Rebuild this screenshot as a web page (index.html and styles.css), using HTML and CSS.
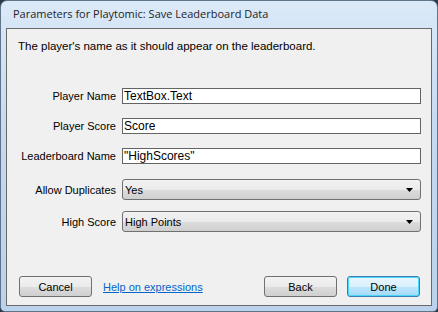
FILE: index.html
```html
<html>
  <head>
    <meta name="viewport" content="width=device-width,initial-scale=1">
    <title>Parameters for Playtomic: Save Leaderboard Data</title>
    <link rel="stylesheet" href="styles.css">
  </head>
  <body>
    <div class="window">
      <div class="titlebar">Parameters for Playtomic: Save Leaderboard Data</div>
      <div class="client">
        <p class="description">The player's name as it should appear on the leaderboard.</p>

        <div class="fields">
          <label class="field-label">Player Name</label>
          <div class="textbox">TextBox.Text</div>

          <label class="field-label">Player Score</label>
          <div class="textbox">Score</div>

          <label class="field-label">Leaderboard Name</label>
          <div class="textbox">"HighScores"</div>
        </div>

        <div class="fields combos">
          <label class="field-label">Allow Duplicates</label>
          <div class="combo">
            <span>Yes</span>
            <svg class="arrow" width="7" height="4" viewBox="0 0 7 4"><path d="M0 0h7L3.5 4z" fill="#000"/></svg>
          </div>

          <label class="field-label">High Score</label>
          <div class="combo">
            <span>High Points</span>
            <svg class="arrow" width="7" height="4" viewBox="0 0 7 4"><path d="M0 0h7L3.5 4z" fill="#000"/></svg>
          </div>
        </div>

        <div class="buttons">
          <button class="btn">Cancel</button>
          <a class="help" href="#">Help on expressions</a>
          <span class="spacer"></span>
          <button class="btn">Back</button>
          <button class="btn btn-default">Done</button>
        </div>
      </div>
    </div>
  </body>
</html>
```

FILE: styles.css
```css
:root {
    --client: #f0f0f0;
    --edge: #6a6a6a;
    --text: #000000;
    --link: #0066cc;
}

html, body {
    margin: 0;
    padding: 0;
    background: #2c3a48;
}

body {
    font-family: "Liberation Sans", Arial, sans-serif;
    font-size: 11px;
    color: var(--text);
}

.window {
    width: 438px;
    height: 312px;
    box-sizing: border-box;
    border: 1px solid #5f7389;
    border-radius: 7px 7px 5px 5px;
    background: linear-gradient(to bottom, #dbe9f8 0%, #c6daf1 40%, #bad2ec 100%);
    padding: 0 5px 5px 5px;
    display: flex;
    flex-direction: column;
}

.titlebar {
    height: 27px;
    line-height: 26px;
    padding-left: 7px;
    font-family: "Open Sans", sans-serif;
    font-size: 11px;
    color: #1e1e1e;
}

.client {
    flex: 1;
    border: 1px solid var(--edge);
    background: var(--client);
    display: flex;
    flex-direction: column;
}

.description {
    margin: 9px 0 0 11px;
    line-height: 16px;
    font-size: 11.5px;
}

.fields {
    display: grid;
    grid-template-columns: 109px 299px;
    column-gap: 6px;
    row-gap: 14px;
    align-items: center;
    margin-top: 34px;
}

.combos {
    row-gap: 11px;
    margin-top: 15px;
}

.field-label {
    text-align: right;
}

.textbox {
    height: 16px;
    box-sizing: border-box;
    border: 1px solid #646464;
    background: #ffffff;
    padding: 0 1px;
    line-height: 14px;
    font-size: 12px;
}

.combo {
    height: 21px;
    box-sizing: border-box;
    border: 1px solid #707070;
    border-radius: 3px;
    background: linear-gradient(to bottom, #f2f2f2 0%, #ebebeb 50%, #dddddd 51%, #cfcfcf 100%);
    display: flex;
    align-items: center;
    padding: 1px 7px 0 2px;
}

.combo span {
    flex: 1;
}

.buttons {
    margin-top: auto;
    margin-bottom: 8px;
    display: flex;
    align-items: center;
    padding: 0 11px 0 12px;
}

.btn {
    width: 73px;
    height: 21px;
    box-sizing: border-box;
    border: 1px solid #707070;
    border-radius: 3px;
    background: linear-gradient(to bottom, #f2f2f2 0%, #ebebeb 50%, #dddddd 51%, #cfcfcf 100%);
    font-family: inherit;
    font-size: 11px;
    color: var(--text);
    padding: 0;
}

.btn-default {
    margin-left: 10px;
    border-color: #3c7fb1;
    box-shadow: inset 0 0 0 1px #48d7fc;
    background: linear-gradient(to bottom, #eaf6fd 0%, #d9f0fc 50%, #bee6fd 51%, #a7d9f5 100%);
}

.help {
    margin-left: 11px;
    color: var(--link);
}

.spacer {
    flex: 1;
}
```
